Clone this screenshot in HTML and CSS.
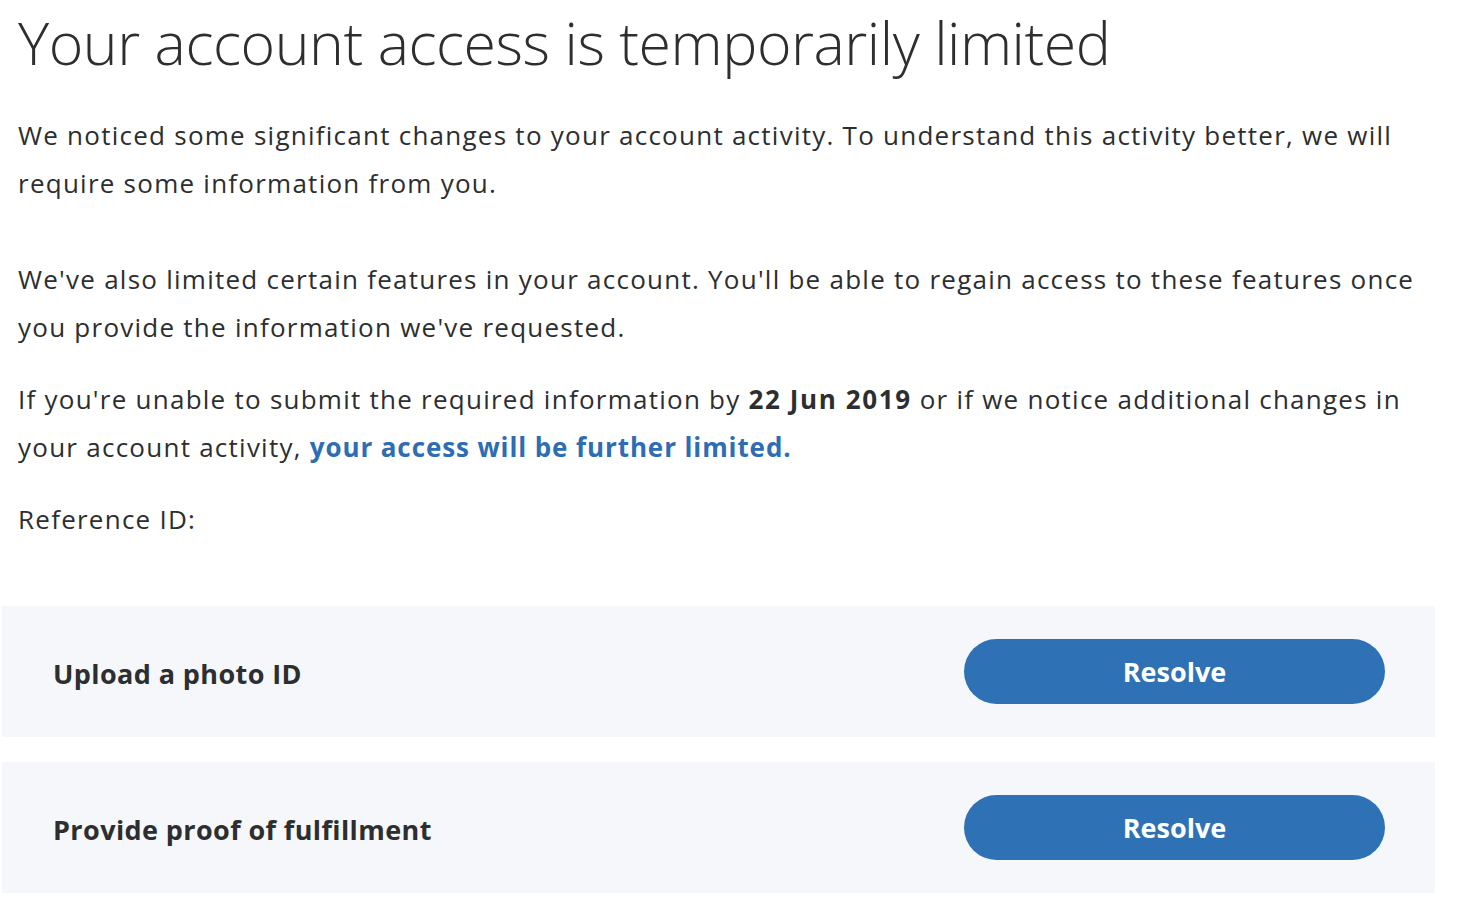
FILE: index.html
```html
<!DOCTYPE html>
<html lang="en">
<head>
    <meta charset="UTF-8">
    <meta name="viewport" content="width=device-width, initial-scale=1.0">
    <title>Account limited</title>
    <link rel="stylesheet" href="styles.css">
</head>
<body>
<div class="page">
    <div class="intro">
        <h1>Your account access is temporarily limited</h1>
        <p class="gap-big">We noticed some significant changes to your account activity. To understand this activity better, we will require some information from you.</p>
        <p>We've also limited certain features in your account. You'll be able to regain access to these features once you provide the information we've requested.</p>
        <p>If you're unable to submit the required information by <strong>22 Jun 2019</strong> or if we notice additional changes in your account activity, <a href="#">your access will be further limited.</a></p>
        <p>Reference ID:</p>
    </div>
    <div class="task">
        <span class="task-name">Upload a photo ID</span>
        <button class="resolve">Resolve</button>
    </div>
    <div class="task">
        <span class="task-name">Provide proof of fulfillment</span>
        <button class="resolve">Resolve</button>
    </div>
</div>
</body>
</html>
```

FILE: styles.css
```css
body {
    margin: 0;
    font-family: 'Open Sans', sans-serif;
    color: #2c2e2f;
    background: #fff;
}
.page {
    width: 1433px;
    margin-left: 2px;
}
.intro {
    padding: 0 16px 0 16px;
}
h1 {
    font-size: 59px;
    font-weight: 300;
    letter-spacing: -0.45px;
    margin: 0;
    padding-top: 6px;
    line-height: 72px;
}
p {
    font-size: 26px;
    line-height: 48px;
    letter-spacing: 1.25px;
    margin: 0 0 24px;
}
p.gap-big {
    margin: 33px 0 48px;
}
strong {
    font-weight: 700;
    letter-spacing: 1.6px;
}
a {
    color: #2c6db3;
    font-weight: 700;
    letter-spacing: 0.9px;
    text-decoration: none;
}
.task {
    background: #f5f7fa;
    height: 131px;
    display: flex;
    align-items: center;
    justify-content: space-between;
    padding: 0 50px 0 51px;
    margin-bottom: 25px;
}
.intro + .task {
    margin-top: 63px;
}
.task-name {
    font-size: 27px;
    font-weight: 700;
    letter-spacing: 0.4px;
    padding-top: 3px;
}
.resolve {
    width: 421px;
    height: 65px;
    border: 0;
    border-radius: 33px;
    background: #2e71b5;
    color: #fff;
    font-family: inherit;
    font-size: 27px;
    font-weight: 700;
    cursor: pointer;
}
```
